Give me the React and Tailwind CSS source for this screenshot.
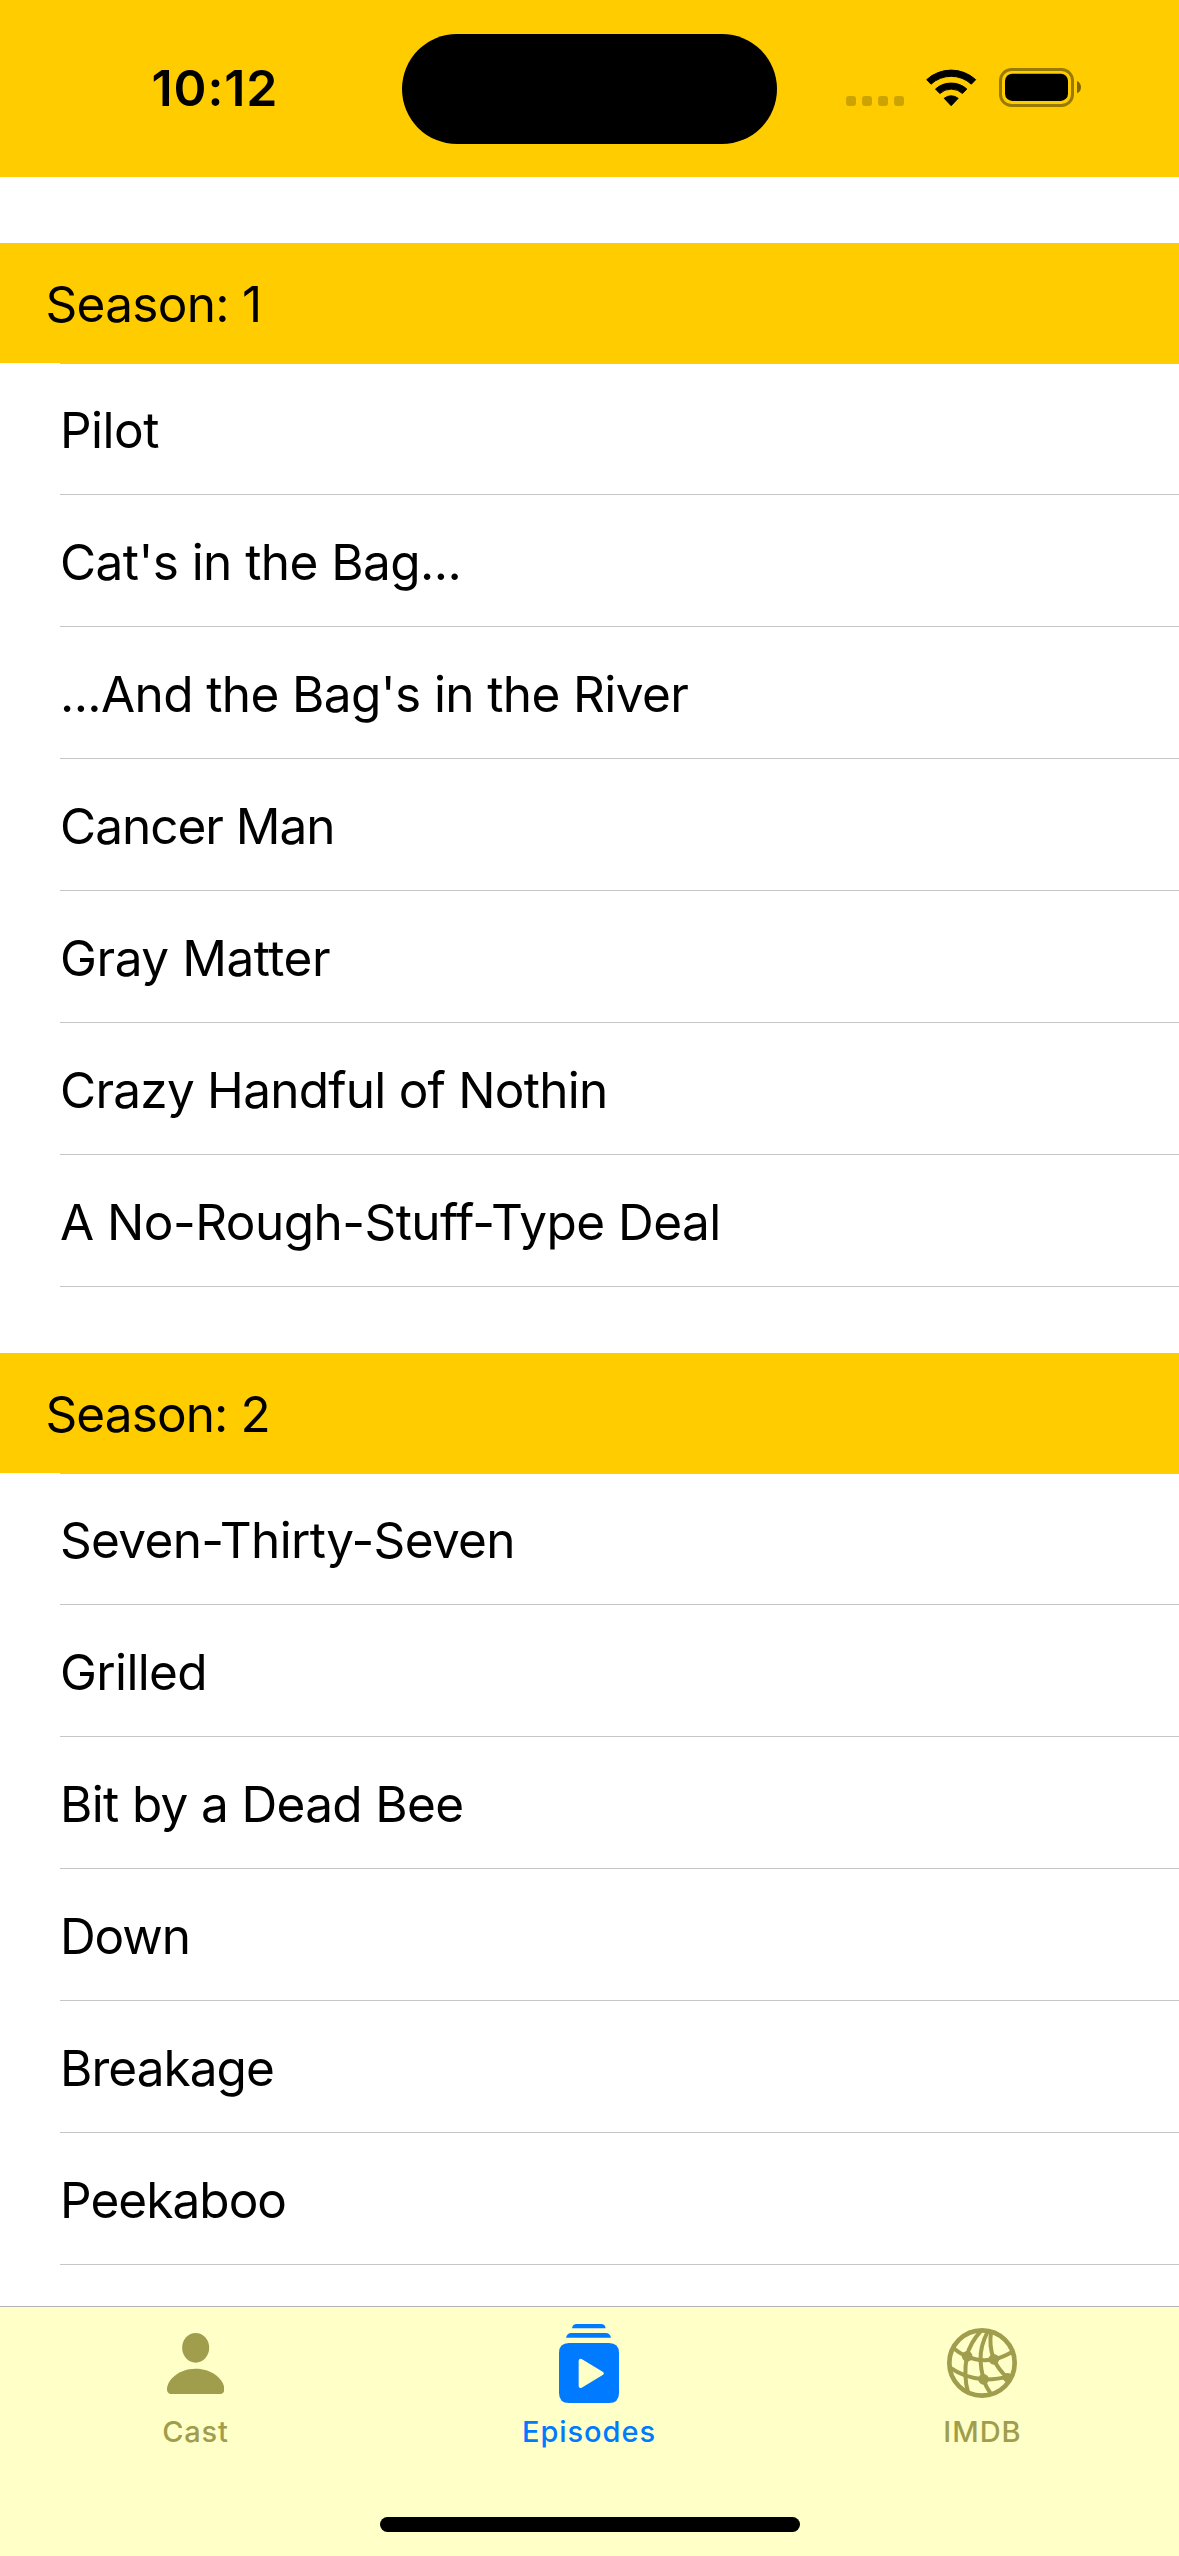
const seasons = [
  {
    title: "Season: 1",
    tracking: "tracking-[-0.7px]",
    episodes: [
      { name: "Pilot", tracking: "tracking-[-0.5px]" },
      { name: "Cat's in the Bag...", tracking: "tracking-[-0.56px]" },
      { name: "...And the Bag's in the River", tracking: "tracking-[-0.6px]" },
      { name: "Cancer Man", tracking: "tracking-[-1.02px]" },
      { name: "Gray Matter", tracking: "tracking-[-0.45px]" },
      { name: "Crazy Handful of Nothin", tracking: "tracking-[-0.76px]" },
      { name: "A No-Rough-Stuff-Type Deal", tracking: "tracking-[-0.53px]" },
    ],
  },
  {
    title: "Season: 2",
    tracking: "tracking-[-0.9px]",
    episodes: [
      { name: "Seven-Thirty-Seven", tracking: "tracking-[-0.66px]" },
      { name: "Grilled", tracking: "tracking-[-0.65px]" },
      { name: "Bit by a Dead Bee", tracking: "tracking-[-0.65px]" },
      { name: "Down", tracking: "tracking-[-1.1px]" },
      { name: "Breakage", tracking: "tracking-[-0.95px]" },
      { name: "Peekaboo", tracking: "tracking-[-0.95px]" },
    ],
  },
];

function WifiIcon() {
  return (
    <svg viewBox="319 86 151 113" className="h-[37.67px] w-[50.33px]" stroke="#000" strokeWidth="3" strokeLinejoin="round">
      <path d="M321 118 A108.5 108.5 0 0 1 468 118 L455 131.5 A89.5 89.5 0 0 0 334 131.5 Z" />
      <path d="M347.5 146 A71 71 0 0 1 441.5 146 L428.5 159.5 A50.5 50.5 0 0 0 360.5 159.5 Z" />
      <path d="M373.5 174 A33 33 0 0 1 415.5 174 L394.5 196 Z" />
    </svg>
  );
}

function BatteryIcon() {
  return (
    <svg viewBox="537 84 246 117" className="h-[39px] w-[82px]">
      <rect x="541.5" y="88.5" width="216" height="108" rx="33" fill="none" stroke="#997a00" strokeWidth="9" />
      <rect x="555" y="101" width="189" height="82" rx="22" />
      <path d="M771 123 C779 126 783 134 783 142 C783 150 779 157 771 160 Z" fill="#7f6600" />
    </svg>
  );
}

function StatusBar() {
  return (
    <header className="grid h-[177px] shrink-0 grid-cols-[402px_375px_402px] bg-[#ffcc00]">
      <div className="pl-[151.5px] pt-[56px] text-[50px] font-semibold leading-[64px] tracking-[0.9px]">10:12</div>
      <div className="mt-[33.5px] h-[110.5px] rounded-full bg-black" />
      <div className="flex items-start pl-[69px]">
        <div className="mt-24 flex gap-1.5">
          <i className="size-2.5 rounded-[3px] bg-[#cca300]" />
          <i className="size-2.5 rounded-[3px] bg-[#cca300]" />
          <i className="size-2.5 rounded-[3px] bg-[#cca300]" />
          <i className="size-2.5 rounded-[3px] bg-[#cca300]" />
        </div>
        <div className="ml-[22.33px] mt-[68.67px]">
          <WifiIcon />
        </div>
        <div className="ml-[22.33px] mt-[68px]">
          <BatteryIcon />
        </div>
      </div>
    </header>
  );
}

function Season({ season }) {
  return (
    <section className="pt-[66px]">
      <h2 className={`flex h-[120px] items-center bg-[#ffcc00] pl-[45.5px] pt-0.5 ${season.tracking}`}>{season.title}</h2>
      <ul className="ml-[60px] border-t border-[#c6c6c8]">
        {season.episodes.map((e) => (
          <li
            key={e.name}
            className={`flex h-[132px] items-center border-b border-[#c6c6c8] pt-[3px] first:h-[131px] first:pt-0.5 ${e.tracking}`}
          >
            {e.name}
          </li>
        ))}
      </ul>
    </section>
  );
}

function CastIcon() {
  return (
    <svg viewBox="141 128 172 184" className="h-[61.33px] w-[57.33px]" fill="currentColor">
      <ellipse cx="227" cy="172.5" rx="40.5" ry="44.5" />
      <path d="M158 312 Q141 312 141 297 C141 270 175 235.5 227 235.5 C279 235.5 313 270 313 297 Q313 312 296 312 Z" />
    </svg>
  );
}

function EpisodesIcon() {
  return (
    <svg viewBox="177 102 180 237" className="h-[79px] w-[60px]" fill="currentColor">
      <path d="M216 114.5 Q218 102 230 102 H303 Q315 102 317 114.5 Z" />
      <path d="M198 143.5 Q201 129 214 129 H317 Q330 129 333 143.5 Z" />
      <path
        fillRule="evenodd"
        d="M207 159 H327 Q357 159 357 189 V309 Q357 339 327 339 H207 Q177 339 177 309 V189 Q177 159 207 159 Z M236 212 V289 Q237 296 245 293 L308 255 Q315 250 308 245 L245 207 Q237 204 236 212 Z"
      />
    </svg>
  );
}

function GlobeIcon() {
  return (
    <svg viewBox="140.5 114 210 210" className="size-[70px]" fill="none" stroke="currentColor" strokeWidth="12">
      <circle cx="245.5" cy="219" r="98" strokeWidth="14" />
      <path d="M243 122 C224 143 206 172 200 199 C194 232 194 274 204 308" />
      <path d="M263 124 C248 152 240 184 241 212 C242 235 246 252 250 268 C255 284 262 297 271 310" />
      <path d="M273 124 C268 154 272 184 281 208 C290 230 303 246 320 262" />
      <path d="M158 172 C170 184 184 192 200 199 C226 211 253 213 281 208 C300 204 318 196 337 185" />
      <path d="M150 233 C178 253 213 265 250 268 C274 269 300 266 328 259" />
      <g fill="currentColor" stroke="none">
        <circle cx="201" cy="199" r="16" />
        <circle cx="281" cy="208" r="16" />
        <circle cx="250" cy="268" r="16" />
        <circle cx="322" cy="263" r="14" />
      </g>
    </svg>
  );
}

function TabBar() {
  return (
    <nav className="flex h-[250px] shrink-0 flex-col border-t border-[#b2b2b2] bg-[#ffffc8]">
      <div className="grid h-[210px] grid-cols-3 text-[29px] font-medium leading-9 text-[#a09d4d]">
        <div className="flex flex-col items-center">
          <div className="flex h-[107px] items-start pt-[25.67px] pr-[1.5px]">
            <CastIcon />
          </div>
          <span className="pr-0.5 tracking-[0.8px]">Cast</span>
        </div>
        <div className="flex flex-col items-center text-[#007aff]">
          <div className="flex h-[107px] items-start pt-[17px] pr-[1.5px]">
            <EpisodesIcon />
          </div>
          <span className="pr-px tracking-[0.95px]">Episodes</span>
        </div>
        <div className="flex flex-col items-center">
          <div className="flex h-[107px] items-start pt-[21px] pr-[1.5px]">
            <GlobeIcon />
          </div>
          <span className="tracking-[1px]">IMDB</span>
        </div>
      </div>
      <div className="mx-auto h-[15px] w-[420px] rounded-full bg-black" />
    </nav>
  );
}

export default function App() {
  return (
    <div className="flex h-[2556px] w-[1179px] flex-col overflow-hidden bg-white font-['Inter',sans-serif] text-[49.5px] leading-[60px] text-black">
      <StatusBar />
      <main className="min-h-0 flex-1 overflow-hidden">
        {seasons.map((s) => (
          <Season key={s.title} season={s} />
        ))}
      </main>
      <TabBar />
    </div>
  );
}
